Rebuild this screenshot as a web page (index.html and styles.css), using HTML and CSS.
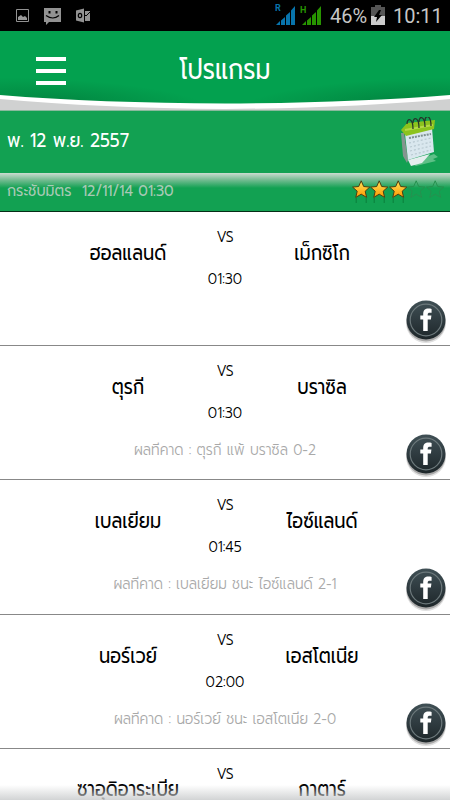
FILE: index.html
```html
<!DOCTYPE html>
<html lang="th">
<head>
<meta charset="utf-8">
<title>โปรแกรม</title>
<link rel="stylesheet" href="styles.css">
</head>
<body>
<svg class="defs" width="0" height="0" aria-hidden="true">
  <defs>
    <linearGradient id="disc" x1="0" y1="0" x2="0" y2="1"><stop offset="0" stop-color="#405055"/><stop offset=".5" stop-color="#2f3b40"/><stop offset="1" stop-color="#1d2629"/></linearGradient>
    <linearGradient id="gold" x1="0" y1="0" x2="0" y2="1"><stop offset="0" stop-color="#ffe45a"/><stop offset="1" stop-color="#ff9800"/></linearGradient>
    <symbol id="star" viewBox="0 0 18 24">
      <path d="M4 18v5M14 18v5" stroke="#0b7f3c" stroke-width="1"/>
      <path d="M9 .8l2.500 5.700 6.100.6-4.600 4.100 1.400 6.200L9 14.200l-5.400 3.200L5 11.200.4 7.100l6.100-.6z" fill="url(#gold)" stroke="#4d3d12" stroke-width="1"/>
    </symbol>
    <symbol id="star-off" viewBox="0 0 18 24">
      <path d="M9 .8l2.500 5.700 6.100.6-4.600 4.100 1.400 6.200L9 14.200l-5.400 3.200L5 11.200.4 7.100l6.100-.6z" fill="none" stroke="#27904f" stroke-width="1"/>
    </symbol>
    <symbol id="facebook" viewBox="0 0 44 46">
      <circle cx="22" cy="25" r="20" fill="#000" opacity=".12"/>
      <circle cx="22" cy="24" r="19.500" fill="#000" opacity=".25"/>
      <circle cx="22" cy="22" r="19.500" fill="url(#disc)"/>
      <circle cx="22" cy="22" r="15.800" fill="none" stroke="#6d797c" stroke-width="1.200"/>
      <path d="M19.200 33V21.500h-2.900v-4h2.900v-1.400c0-3.900 2-5.600 5.200-5.600 1.200 0 2.400.1 3.200.4v3.800h-1.700c-1.600 0-2.200.6-2.200 1.800v1h3.700l-.5 4h-3.200V33z" fill="#fff"/>
    </symbol>
  </defs>
</svg>
<div class="phone">
  <div class="status">
    <svg class="notices" width="80" height="20" viewBox="0 0 80 20">
      <path d="M1.500 4.500h12v12h-12z" fill="none" stroke="#929292"/>
      <path d="M3 15v-3l3-2 2 2 2-1 2 2v2z" fill="#999"/>
      <path d="M29 3h17v14H34l-3 3v-3h-2z" fill="#929292"/>
      <path d="M33.500 6h2v2.500h-2zM40.500 6h2v2.500h-2z" fill="#000"/>
      <path d="M31 10.500q7 5 13 0" fill="none" stroke="#000" stroke-width="1.200"/>
      <path d="M61 5.500l8-2v14l-8-2zM70 6h5v10h-5z" fill="#929292"/>
      <ellipse cx="65" cy="10.500" rx="1.700" ry="2.200" fill="none" stroke="#000" stroke-width="1.200"/>
      <path d="M69 9l2 2 4-4" fill="none" stroke="#000"/>
    </svg>
    <svg class="signals" width="50" height="24" viewBox="0 0 50 24">
      <path d="M1 22l4-4v4zM6 17.500l4-3.500v8H6zM11 12.500l4-3.500v13h-4zM16 7.500L20 3v19h-4z" fill="#0874ac"/>
      <path d="M1 22l4-4v4zM6 17.500l4-3.500v8H6zM11 12.500l4-3.500v13h-4zM16 7.500L20 3v19h-4z" fill="#279400" transform="translate(26)"/>
      <text x="0" y="8" class="net net-r">R</text><text x="25" y="10" class="net net-h">H</text>
    </svg>
    <span class="percent">46%</span>
    <svg class="battery" width="14" height="21" viewBox="0 0 14 21">
      <path d="M4 0h6v2h4v10H0V2h4z" fill="#555"/><path d="M0 11h14v9H0z" fill="#ccc"/>
      <path d="M8 5L3 12h3l-1 5 6-7H8l2-5z" fill="#000"/>
    </svg>
    <span class="clock">10:11</span>
  </div>
  <header class="header">
    <svg class="swoosh" width="450" height="80" viewBox="0 0 450 80">
      <defs>
        <radialGradient id="shade"><stop offset="0" stop-color="#00602c" stop-opacity=".38"/><stop offset="1" stop-color="#00602c" stop-opacity="0"/></radialGradient>
      </defs>
      <path d="M0 0h450v80H0z" fill="#03a14f"/>
      <ellipse cx="58" cy="69" rx="150" ry="21" fill="url(#shade)" transform="rotate(3 58 69)"/>
      <ellipse cx="392" cy="69" rx="150" ry="21" fill="url(#shade)" transform="rotate(-3 392 69)"/>
      <path d="M0 64Q100 72 225 72.500Q350 72 450 64V80H0z" fill="#fff"/>
      <path d="M0 68Q100 77 225 78Q350 77 450 68V80H0z" fill="#d0d1d1"/>
    </svg>
    <div class="menu"><i></i><i></i><i></i></div>
    <h1 class="title">โปรแกรม</h1>
  </header>
  <section class="date">
    <span class="day">พ. 12 พ.ย. 2557</span>
    <svg class="calendar" width="42" height="52" viewBox="0 0 42 52">
      <path d="M10 46l24-9 4 3-5 2 3 2-12 3-8 2z" fill="#a9dfbb" opacity=".5"/>
      <path d="M4 16l4 27-1 3-4-7-2-23z" fill="#83958f"/>
      <path d="M8 43l22-6-8 9-11 3z" fill="#e5eeee"/>
      <path d="M5 17l27-6 2 24-26 8z" fill="#d9e7ee"/>
      <path d="M1 13L7 6l28-3-1 9-28 7z" fill="#8cc31d"/>
      <path d="M5 13l28-5" stroke="#b3d946" stroke-width="2"/>
      <path d="M9 21l22-4" stroke="#7d8f90" stroke-width="2" stroke-dasharray="2 1"/>
      <path d="M9 26l22-5M10 30l21-5M10 34l21-5M11 38l20-5" stroke="#b7c8d0" stroke-width="1.200" stroke-dasharray="2 2"/>
      <g fill="none" stroke="#26352a" stroke-width="1.300"><path d="M7 7c0-7 6-6 6 5M13 6c0-7 6-6 6 5M19 5c0-7 6-6 6 5M25 4c0-7 6-6 6 5"/></g>
    </svg>
  </section>
  <section class="league">
    <span class="league-name">กระชับมิตร&nbsp; 12/11/14 01:30</span>
    <div class="stars">
      <svg><use href="#star"/></svg><svg><use href="#star"/></svg><svg><use href="#star"/></svg><svg><use href="#star-off"/></svg><svg><use href="#star-off"/></svg>
    </div>
  </section>
  <main class="matches">
    <article class="match">
      <div class="teams"><span class="team">ฮอลแลนด์</span><div class="middle"><span class="vs">VS</span><time>01:30</time></div><span class="team">เม็กซิโก</span></div>
      <svg class="share"><use href="#facebook"/></svg>
    </article>
    <article class="match">
      <div class="teams"><span class="team">ตุรกี</span><div class="middle"><span class="vs">VS</span><time>01:30</time></div><span class="team">บราซิล</span></div>
      <p class="guess">ผลทีคาด : ตุรกี แพ้ บราซิล 0-2</p>
      <svg class="share"><use href="#facebook"/></svg>
    </article>
    <article class="match">
      <div class="teams"><span class="team">เบลเยียม</span><div class="middle"><span class="vs">VS</span><time>01:45</time></div><span class="team">ไอซ์แลนด์</span></div>
      <p class="guess">ผลทีคาด : เบลเยียม ชนะ ไอซ์แลนด์ 2-1</p>
      <svg class="share"><use href="#facebook"/></svg>
    </article>
    <article class="match">
      <div class="teams"><span class="team">นอร์เวย์</span><div class="middle"><span class="vs">VS</span><time>02:00</time></div><span class="team">เอสโตเนีย</span></div>
      <p class="guess">ผลทีคาด : นอร์เวย์ ชนะ เอสโตเนีย 2-0</p>
      <svg class="share"><use href="#facebook"/></svg>
    </article>
    <article class="match match-last">
      <div class="teams"><span class="team">ซาอุดิอาระเบีย</span><div class="middle"><span class="vs">VS</span></div><span class="team">กาตาร์</span></div>
    </article>
  </main>
  <div class="fade"></div>
</div>
</body>
</html>
```

FILE: styles.css
```css
* { box-sizing: border-box; }
body { margin: 0; background: #fff; font-family: "Prompt", "Kanit", Roboto, "Noto Sans Thai", sans-serif; }
.defs { position: absolute; }
.phone { position: relative; width: 450px; height: 800px; overflow: hidden; display: flex; flex-direction: column; }
.status { flex: none; height: 31px; background: #000; color: #c6c6c6; display: flex; align-items: center; padding: 0 9px 0 15px; font: 20px/31px Roboto, sans-serif; }
.notices { margin-top: 5px; align-self: flex-start; }
.signals { margin: 3px 5px 0 auto; align-self: flex-start; }
.net { font: bold 9px Roboto, sans-serif; }
.net-r { fill: #0874ac; }
.net-h { fill: #279400; }
.percent { width: 41px; padding-top: 2px; }
.battery { width: 14px; height: 21px; }
.clock { margin-left: 8px; width: 48px; padding-top: 2px; }
.header { flex: none; height: 79px; display: grid; overflow: hidden; }
.header > * { grid-area: 1 / 1; }
.swoosh { display: block; }
.menu { z-index: 1; margin: 26px 0 0 36px; width: 30px; display: flex; flex-direction: column; gap: 8px; }
.menu i { height: 4px; background: #fff; }
.title { z-index: 1; margin: 0; color: #fff; font-size: 29px; font-weight: 400; line-height: 76px; text-align: center; transform: scaleX(.82); }
.date { flex: none; height: 63px; background: #12a152; border-top: 1px solid #8ab99d; display: flex; justify-content: space-between; padding: 0 8px 0 7px; color: #fff; }
.day { font-size: 19px; line-height: 60px; transform: scaleX(.91); transform-origin: left; }
.calendar { margin-top: 6px; }
.league { flex: none; height: 39px; background: linear-gradient(#cbdbd0 0, #7fbf99 6px, #12a152 15px); border-bottom: 1px solid #062d17; display: flex; justify-content: space-between; padding: 0 6px 0 7px; }
.league-name { color: #a9c9b5; font-size: 16px; font-weight: 400; line-height: 37px; transform: scaleX(.89); transform-origin: left; }
.stars { display: flex; padding-top: 7px; }
.stars svg { width: 18.400px; height: 24px; }
.match { height: 134.200px; border-bottom: 1px solid #888; position: relative; }
.teams { display: flex; padding: 0 62px; height: 88px; }
.team { width: 132px; text-align: center; white-space: nowrap; font-size: 22px; font-weight: 400; line-height: 82px; transform: scaleX(.81); }
.middle { width: 62px; display: flex; flex-direction: column; text-align: center; font-size: 16px; font-weight: 300; transform: scaleX(.88); }
.vs { margin-top: 15px; line-height: 21px; }
.middle time { margin-top: 21px; line-height: 21px; }
.guess { margin: 4px 0 0; color: #a9a9a9; font-size: 16px; font-weight: 300; line-height: 24px; text-align: center; transform: scaleX(.865); }
.share { position: absolute; left: 403.500px; top: 86px; width: 44px; height: 46px; }
.match-last { height: 52px; border-bottom: 0; }
.match-last .teams { height: 52px; }
.match-last .team { line-height: 80px; }
.fade { position: absolute; left: 0; right: 0; bottom: 0; height: 15px; background: linear-gradient(rgba(210,212,213,0), rgba(205,207,208,.9)); }
```
